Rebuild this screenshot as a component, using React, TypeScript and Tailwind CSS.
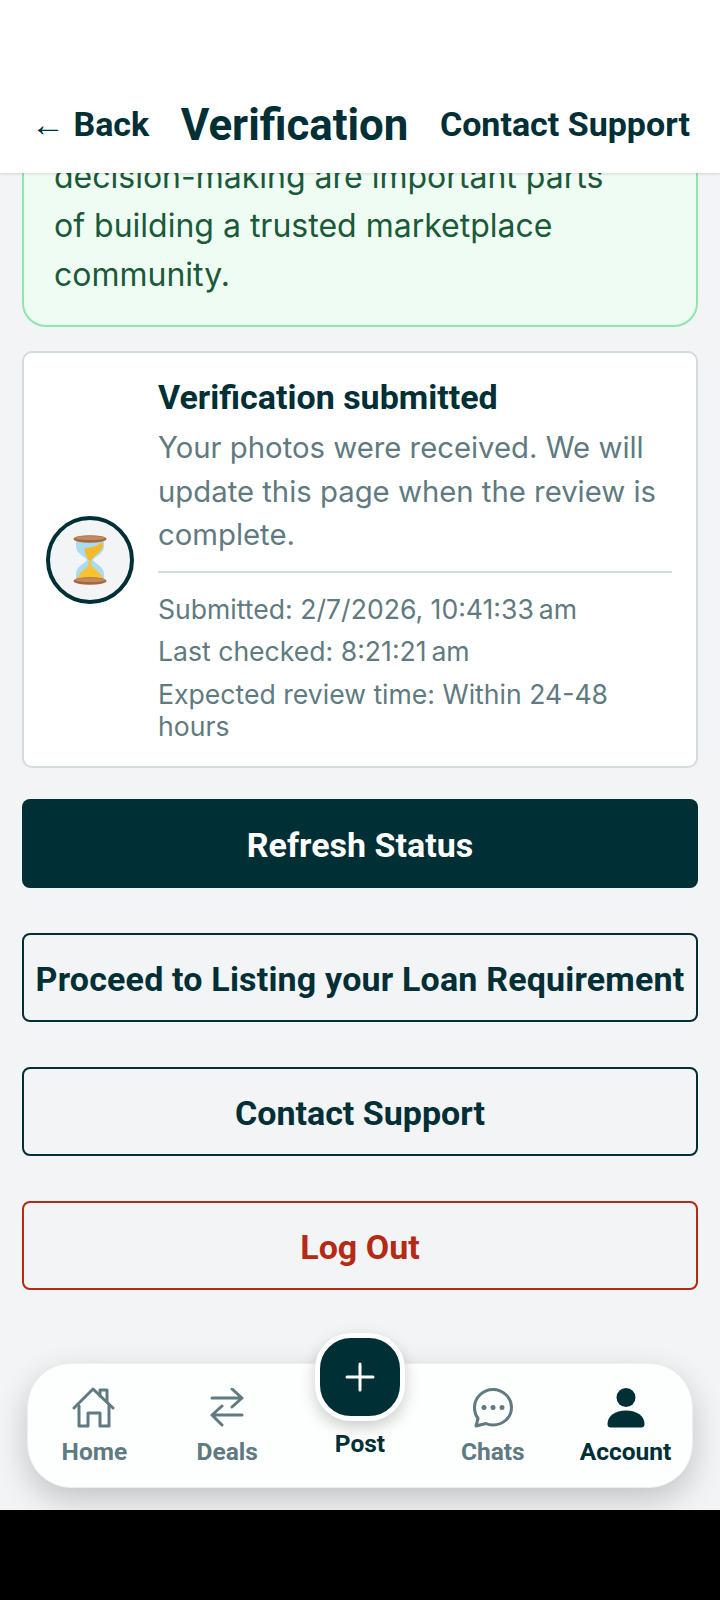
import React from "react";

const roboto = "font-['Roboto',sans-serif]";
const inter = "font-['Inter',sans-serif]";

const HomeIcon = () => (
  <svg width="44" height="42" viewBox="0 0 44 42" fill="none" stroke="#5f7a80" strokeWidth="3" strokeLinejoin="round" strokeLinecap="round">
    <path d="M2 21 L21 2 L41 21" />
    <path d="M28 9 V3 H35 V15" />
    <path d="M7 19 V39 H16 V26 H28 V39 H37 V18" />
  </svg>
);

const DealsIcon = () => (
  <svg width="34" height="40" viewBox="0 1 34 40" fill="none" stroke="#5f7a80" strokeWidth="3" strokeLinecap="round" strokeLinejoin="round">
    <path d="M2 11 H32 L22 2 M32 11 L22 20" />
    <path d="M32 28 H2 L12 19 M2 28 L12 38" />
  </svg>
);

const ChatIcon = () => (
  <svg width="40" height="40" viewBox="0 0 40 40" fill="none">
    <path d="M20 1.5 C30 1.5 38.5 9.5 38.5 19.5 C38.5 29.5 30 37 20 37 C17.500 37 15 36.500 13 35.500 L3 38 L5 30.500 C2.800 27.500 1.500 23.500 1.500 19.500 C1.500 9.500 10 1.500 20 1.500 Z" stroke="#5f7a80" strokeWidth="3" strokeLinejoin="round" />
    <circle cx="11" cy="19.500" r="2.500" fill="#5f7a80" />
    <circle cx="20" cy="19.500" r="2.500" fill="#5f7a80" />
    <circle cx="29" cy="19.500" r="2.500" fill="#5f7a80" />
  </svg>
);

const AccountIcon = () => (
  <svg width="38" height="40" viewBox="0 0 38 40" fill="#002f36">
    <circle cx="19" cy="9.500" r="9.500" />
    <path d="M0.500 36 C0.500 28 8 22.500 19 22.500 C30 22.500 37.500 28 37.500 36 C37.500 38.500 36.500 39.500 34 39.500 H4 C1.500 39.500 0.500 38.500 0.500 36 Z" />
  </svg>
);

const Hourglass = () => (
  <svg width="34" height="50" viewBox="0 0 34 50">
    <path d="M3 5 H31 V11 C31 19 22 21 20 25 C22 29 31 31 31 39 V45 H3 V39 C3 31 12 29 14 25 C12 21 3 19 3 11 Z" fill="#a9dcf2" />
    <path d="M12 13 C18 13 24 11 29 7 L30 11 C29 17 21 20 18.500 25 L15.500 25 C14 21 11 18 12 13 Z" fill="#f6b92b" />
    <path d="M16 25 H18 L18.500 31 C23 35 29 39 30 44 H4 C5 39 11 35 15.500 31 Z" fill="#f9c22e" />
    <ellipse cx="17" cy="4" rx="16.500" ry="3.800" fill="#a5673f" />
    <ellipse cx="17" cy="46" rx="16.500" ry="3.800" fill="#a5673f" />
    <ellipse cx="17" cy="3" rx="15" ry="2" fill="#c28a5e" />
    <ellipse cx="17" cy="45" rx="15" ry="2" fill="#c28a5e" />
  </svg>
);

const NavItem = ({
  icon,
  label,
  active,
}: {
  icon: React.ReactNode;
  label: string;
  active?: boolean;
}) => (
  <div className="flex-1 flex flex-col items-center">
    <div className="h-[42px] flex items-center justify-center">{icon}</div>
    <span
      className={`${roboto} mt-[8px] text-[24.500px] leading-[30px] font-bold ${
        active ? "text-[#002f36]" : "text-[#5f7a80]"
      }`}
    >
      {label}
    </span>
  </div>
);

const ActionButton = ({
  label,
  className,
}: {
  label: string;
  className: string;
}) => (
  <button
    className={`${roboto} w-full h-[89px] pt-[3px] rounded-[8px] text-[34px] font-bold flex items-center justify-center whitespace-nowrap ${className}`}
  >
    {label}
  </button>
);

export default function App() {
  return (
    <div className="w-[720px] h-[1600px] flex flex-col bg-black overflow-hidden">
      <header className="h-[173px] shrink-0 bg-white pt-[99px] pl-[31px] pr-[30px] flex items-start justify-between text-[#002f36] font-bold relative z-10 shadow-[0_1px_3px_rgba(0,0,0,0.12)]">
        <span className={`${roboto} text-[34px] leading-[50px]`}>
          <span className="font-normal">←</span> Back
        </span>
        <span className={`${roboto} pt-[1px] text-[43.800px] leading-[50px]`}>Verification</span>
        <span className={`${roboto} text-[34px] leading-[50px]`}>Contact Support</span>
      </header>

      <main className="relative h-[1337px] shrink-0 bg-[#f3f4f6] overflow-hidden px-[22px]">
        <section className={`${inter} -mt-[60px] bg-[#eefcf4] border-2 border-[#8ee6ab] rounded-[24px] pt-[37px] pb-[26px] pl-[30px] pr-[80px] text-[32px] leading-[49px] text-[#1b5a38]`}>
          <p>
            decision-making are important parts of building a trusted marketplace community.
          </p>
        </section>

        <section className="mt-[24px] h-[417px] bg-white border-2 border-[#d3dbde] rounded-[10px] flex items-center pl-[22px] pr-[24px] gap-[24px]">
          <div className="w-[88px] h-[88px] shrink-0 rounded-full border-[4px] border-[#002f36] bg-[#f3f4f6] flex items-center justify-center">
            <Hourglass />
          </div>
          <div className="flex-1 min-w-0 pb-[2px]">
            <h2 className={`${roboto} text-[34px] leading-[44px] font-bold text-[#002f36]`}>
              Verification submitted
            </h2>
            <p className={`${inter} mt-[7px] text-[29.300px] leading-[43.500px] text-[#5f7a80]`}>
              Your photos were received. We will update this page when the review is complete.
            </p>
            <div className={`${inter} mt-[14px] border-t-2 border-[#d3dbde] pt-[15px] text-[26.600px] text-[#5f7a80]`}>
              <p className="leading-[42px]">Submitted: 2/7/2026, 10:41:33{"\u202f"}am</p>
              <p className="leading-[42px]">Last checked: 8:21:21{"\u202f"}am</p>
              <p className="leading-[32px] mt-[6px]">Expected review time: Within 24-48 hours</p>
            </div>
          </div>
        </section>

        <div className="mt-[31px] flex flex-col gap-[45px]">
          <ActionButton label="Refresh Status" className="bg-[#002f36] text-white" />
          <ActionButton label="Proceed to Listing your Loan Requirement" className="border-2 border-[#002f36] text-[#002f36] tracking-[0.18px]" />
          <ActionButton label="Contact Support" className="border-2 border-[#002f36] text-[#002f36]" />
          <ActionButton label="Log Out" className="border-2 border-[#b52a14] text-[#b52a14]" />
        </div>

        {/* floating tab bar */}
        <nav className="absolute left-[27px] top-[1190px] w-[666px] h-[125px] rounded-[44px] bg-[#fdfefe] border border-[#eceef0] shadow-[0_12px_32px_rgba(0,0,0,0.2)] flex items-start pt-[23px]">
          <NavItem icon={<HomeIcon />} label="Home" />
          <NavItem icon={<DealsIcon />} label="Deals" />
          <div className="flex-1 flex flex-col items-center">
            <div className="-mt-[54px] w-[90px] h-[88px] rounded-[36px] border-[5px] border-white bg-[#002f36] shadow-[0_6px_16px_rgba(0,0,0,0.2)] flex items-center justify-center">
              <svg width="30" height="30" viewBox="0 0 30 30" stroke="white" strokeWidth="3" strokeLinecap="round">
                <path d="M15 2 V28 M2 15 H28" />
              </svg>
            </div>
            <span className={`${roboto} mt-[8px] text-[24.500px] leading-[30px] font-bold text-[#002f36]`}>Post</span>
          </div>
          <NavItem icon={<ChatIcon />} label="Chats" />
          <NavItem icon={<AccountIcon />} label="Account" active />
        </nav>
      </main>

      <div className="flex-1 bg-black" />
    </div>
  );
}
